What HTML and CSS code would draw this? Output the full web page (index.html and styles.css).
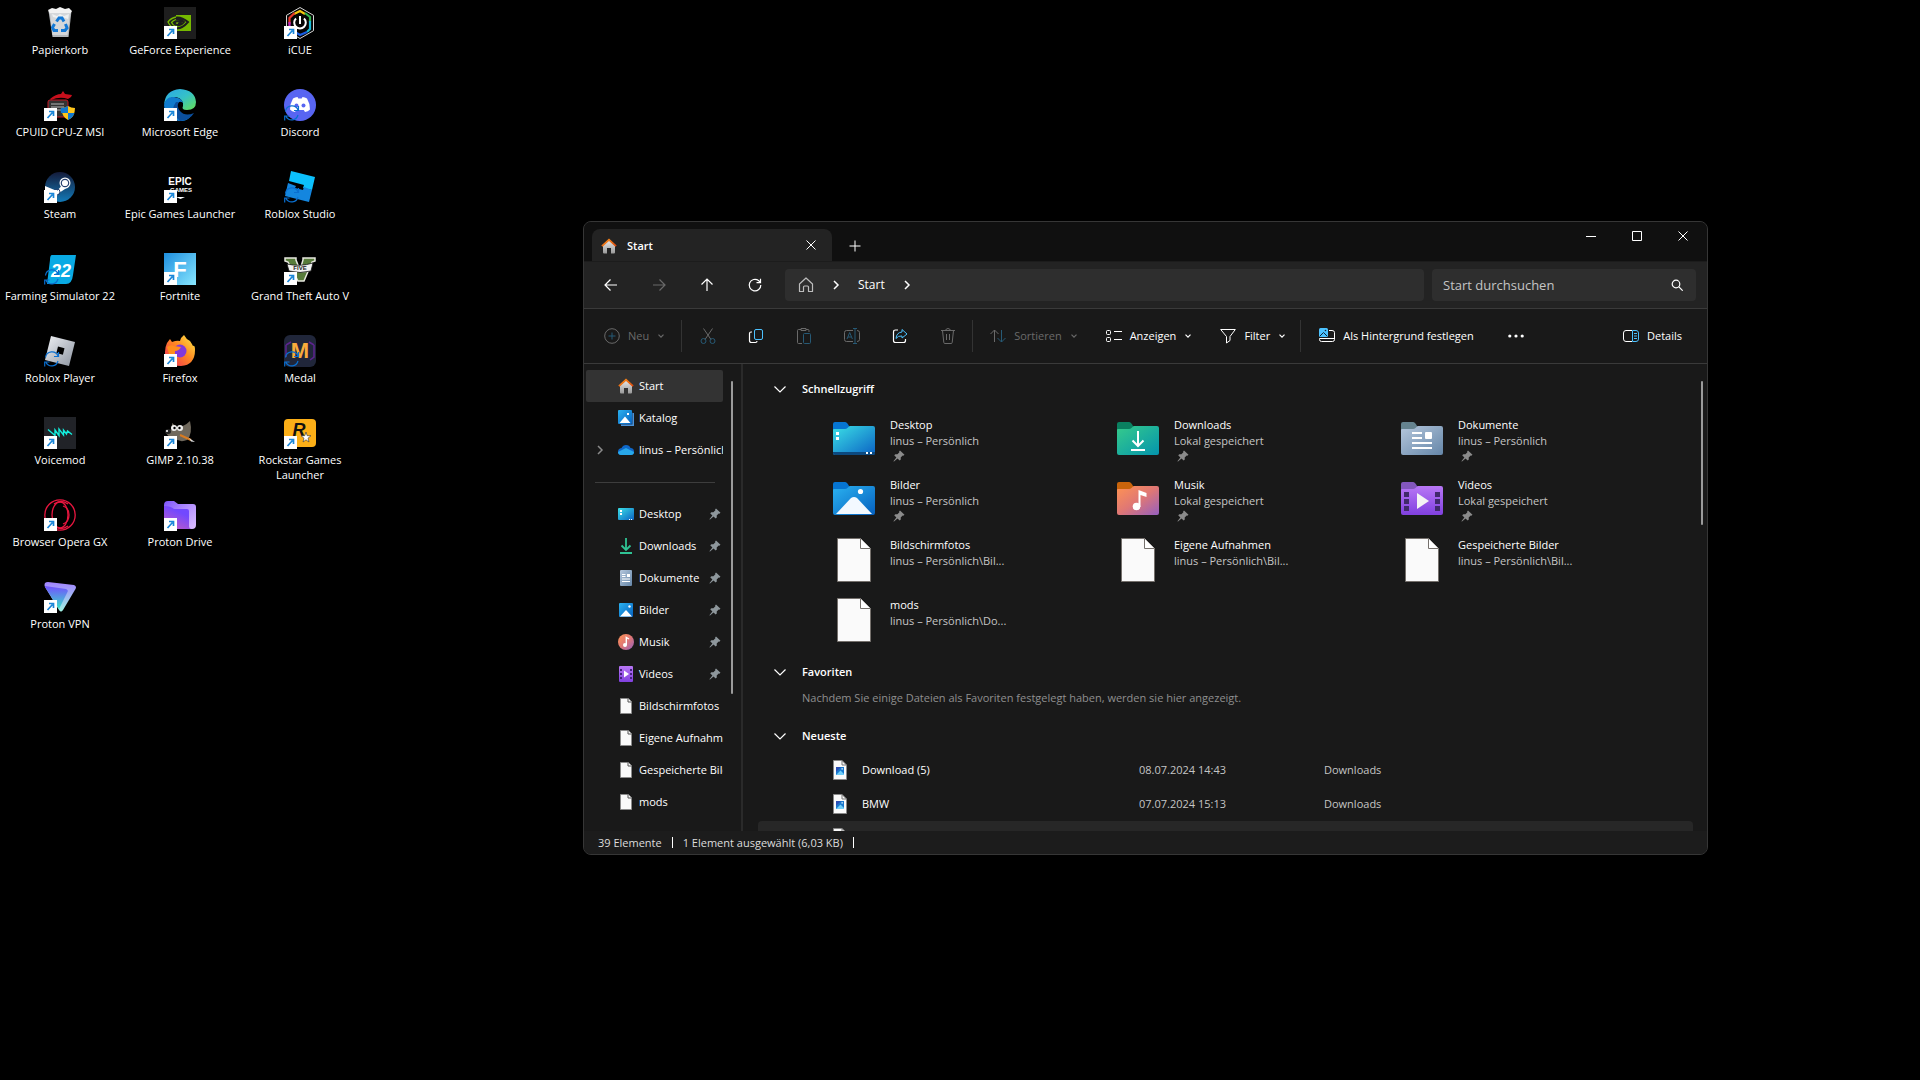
FILE: index.html
```
<!DOCTYPE html>
<html lang="de">

<head>
    <meta charset="UTF-8">
    <title>Start</title>
    <link rel="stylesheet" href="styles.css">
</head>

<body>
    <!-- gemeinsame Symbole -->
    <svg class="defs" width="0" height="0" aria-hidden="true">
        <defs>
            <linearGradient id="gCyan" x1="0" y1="0" x2="1" y2="1"><stop offset="0" stop-color="#3be0e6"/><stop offset="1" stop-color="#0b62c4"/></linearGradient>
            <linearGradient id="gBlue" x1="0" y1="0" x2="1" y2="1"><stop offset="0" stop-color="#2bb2f0"/><stop offset="1" stop-color="#0560bf"/></linearGradient>
            <linearGradient id="gGreen" x1="0" y1="0" x2="1" y2="1"><stop offset="0" stop-color="#36cb8b"/><stop offset="1" stop-color="#0494ad"/></linearGradient>
            <linearGradient id="gOrange" x1="0" y1="0" x2="1" y2="1"><stop offset="0" stop-color="#ff9352"/><stop offset="0.5" stop-color="#df7775"/><stop offset="1" stop-color="#955fc0"/></linearGradient>
            <linearGradient id="gGrey" x1="0" y1="0" x2="1" y2="1"><stop offset="0" stop-color="#b5c7dc"/><stop offset="1" stop-color="#6586a8"/></linearGradient>
            <linearGradient id="gPurple" x1="0" y1="0" x2="0" y2="1"><stop offset="0" stop-color="#b877f5"/><stop offset="1" stop-color="#8040df"/></linearGradient>
            <linearGradient id="gWall" x1="0" y1="0" x2="0" y2="1"><stop offset="0" stop-color="#e8e8e8"/><stop offset="1" stop-color="#999"/></linearGradient>
            <linearGradient id="gRoof" x1="0" y1="0" x2="1" y2="1"><stop offset="0" stop-color="#ff9a1e"/><stop offset="1" stop-color="#d8430c"/></linearGradient>
            <linearGradient id="gSteam" x1="0" y1="0" x2="0" y2="1"><stop offset="0" stop-color="#141b3a"/><stop offset="1" stop-color="#137ab8"/></linearGradient>
            <linearGradient id="gEdge" x1="0" y1="0" x2="1" y2="1"><stop offset="0" stop-color="#2aa6e8"/><stop offset="0.5" stop-color="#35c1c8"/><stop offset="1" stop-color="#66e054"/></linearGradient>
            <linearGradient id="gProton" x1="0" y1="0" x2="1" y2="1"><stop offset="0" stop-color="#7d55fb"/><stop offset="0.5" stop-color="#b592ff"/><stop offset="1" stop-color="#dcc0ff"/></linearGradient>
            <linearGradient id="gDrive" x1="0.8" y1="0" x2="0.2" y2="1"><stop offset="0.3" stop-color="#7248ff"/><stop offset="1" stop-color="#c05bc6"/></linearGradient>
            <linearGradient id="gVpn" x1="0" y1="0" x2="0" y2="1"><stop offset="0" stop-color="#7350ff"/><stop offset="1" stop-color="#38e3c8"/></linearGradient>
            <linearGradient id="gVpnEdge" x1="0" y1="0" x2="0" y2="1"><stop offset="0" stop-color="#a282ff"/><stop offset="1" stop-color="#9ff4e4"/></linearGradient>
            <linearGradient id="gFox" x1="1" y1="0" x2="0" y2="1"><stop offset="0" stop-color="#fff04a"/><stop offset="0.45" stop-color="#ff8a22"/><stop offset="1" stop-color="#f02060"/></linearGradient>
            <linearGradient id="gSilver" x1="0" y1="0" x2="1" y2="1"><stop offset="0" stop-color="#f0f2f6"/><stop offset="1" stop-color="#8b939f"/></linearGradient>
            <linearGradient id="gSky" x1="0" y1="0" x2="1" y2="1"><stop offset="0" stop-color="#1e8ede"/><stop offset="1" stop-color="#88e7ff"/></linearGradient>
        </defs>
        <symbol id="link" viewBox="0 0 13 13">
            <path d="M0 0h13v13H0z" fill="#fff"/>
            <path d="M3.500 10l5-5.500M5 3.500h4.500V8" fill="none" stroke="#1a86d8" stroke-width="1.700"/>
        </symbol>
        <symbol id="sync" viewBox="0 0 16 16">
            <path d="M1.500 6.500A6.500 6.500 0 0 1 14 5M14.500 1v4.500H10M14 10A6.500 6.500 0 0 1 2 11.500M.7 15.500V11H5.500" fill="none" stroke="#0a6fd0" stroke-width="1.200"/>
        </symbol>
        <symbol id="pin" viewBox="0 0 12 12">
            <path d="M7 .5l4.500 4.300-1.200.9-.6-.2-2 2 .1 2.100-1.100 1L4.500 8.400 1 11.500.4 11.300l3-3.900L1.200 5.200l1.200-1 2 .1 2-2-.3-.8z"/>
        </symbol>
        <symbol id="chev" viewBox="0 0 8 8"><path d="M1.500 2.700L4 5.200l2.500-2.500" fill="none" stroke="currentColor" stroke-width="1.200"/></symbol>
        <symbol id="chev-big" viewBox="0 0 14 14"><path d="M1.500 4.500L7 10l5.500-5.500" fill="none" stroke="currentColor" stroke-width="1.200"/></symbol>
        <symbol id="chev-right" viewBox="0 0 12 12"><path d="M4 2l4 4-4 4" fill="none" stroke="currentColor" stroke-width="1.500"/></symbol>
        <symbol id="close" viewBox="0 0 12 12"><path d="M1.500 1.500l9 9M10.500 1.500l-9 9" fill="none" stroke="currentColor"/></symbol>
        <symbol id="house" viewBox="0 0 16 16">
            <path d="M2 7.500L8 2l6 5.500V14.500q0 1-1 1h-3V10H6v5.500H3q-1 0-1-1z" fill="url(#gWall)"/>
            <path d="M8 .5l7.700 7-1.200 1.300L8 3 1.500 8.800.3 7.500z" fill="url(#gRoof)"/>
        </symbol>
        <symbol id="page" viewBox="0 0 16 16"><path d="M2.500.5h8l3 3v12h-11z" fill="#fafafa" stroke="#8b8b8b"/><path d="M10 .5V4h3.500" fill="none" stroke="#555"/></symbol>
        <symbol id="page-big" viewBox="0 0 48 48"><path d="M7.500 3.500h23l10 10v33h-33z" fill="#fafafa" stroke="#75706c"/><path d="M30.500 3.500v10h10" fill="#fff" stroke="#75706c"/></symbol>
        <symbol id="page-image" viewBox="0 0 16 20">
            <path d="M1.500.5h8.500l4.500 4.500v14.500h-13z" fill="#fafafa" stroke="#888"/><path d="M10 .5V5h4.500" fill="none" stroke="#777"/>
            <path d="M4 7h8v8H4z" fill="#1879cf"/><path d="M4 15l4.500-4.500L12 14v1z" fill="#6fcdf8"/><path d="M4 7h5l-5 5z" fill="#2b4fb5"/><path d="M9.500 8.200h1.300v1.300H9.500z" fill="#fff"/>
        </symbol>
        <symbol id="folder-back" viewBox="0 0 48 48"><path d="M3 9q0-2 2-2h10q2 0 4 4l2 1v6H3z"/></symbol>
        <symbol id="folder-front" viewBox="0 0 48 48"><path d="M3 15q0-1 1-1h11q1.500 0 2.500-1l1-1q1-1 2-1h22.500q2 0 2 2v25q0 2-2 2H5q-2 0-2-2z"/></symbol>
        <symbol id="ico-desktop" viewBox="0 0 16 16"><rect y="2" width="16" height="12" rx="1" fill="url(#gCyan)"/><path d="M2 4h2v2H2zM2 7h2v2H2z" fill="#fff"/><path d="M11 13h1v1h-1zM13 13h1v1h-1z" fill="#fff"/></symbol>
        <symbol id="ico-downloads" viewBox="0 0 16 16"><path d="M8 0v11.500M3.500 7.500L8 12l4.500-4.500M2 15h12" fill="none" stroke="#2fc394" stroke-width="1.800"/></symbol>
        <symbol id="ico-docs" viewBox="0 0 16 16"><rect x="2" width="12" height="16" rx="1" fill="url(#gGrey)"/><path d="M4 4.500h3.500M4 6.500h3.500M4 9h8M4 11.500h8" stroke="#fff"/><path d="M9 4h3v3H9z" fill="#fff"/></symbol>
        <symbol id="ico-images" viewBox="0 0 16 16"><rect x="1" y="1" width="14" height="14" rx="1" fill="url(#gBlue)"/><path d="M2 14.500L8 8l6 6.500z" fill="#fff"/><circle cx="11.500" cy="4.500" r="1.200" fill="#fff"/></symbol>
        <symbol id="ico-music" viewBox="0 0 16 16"><circle cx="8" cy="8" r="8" fill="url(#gOrange)"/><circle cx="7" cy="11" r="2" fill="#fff"/><path d="M8.300 11V3.500l2.700 1.500" fill="none" stroke="#fff" stroke-width="1.400"/></symbol>
        <symbol id="ico-videos" viewBox="0 0 16 16"><rect x="1" width="14" height="16" rx="1" fill="url(#gPurple)"/><path d="M2 3h2v2H2zM2 7h2v2H2zM2 11h2v2H2zM12 3h2v2h-2zM12 7h2v2h-2zM12 11h2v2h-2z" fill="#45227e"/><path d="M6 4.500l5 3.500-5 3.500z" fill="#fff"/></symbol>
    </svg>

    <main class="desktop">
        <div class="column">
            <button class="shortcut">
                <svg viewBox="0 0 32 32"><path d="M4.500 4h23L24.500 30h-16z" fill="#b4b8bc"/><path d="M4 3l4-2 4 1 4-2 5 2 4-1 3 3-2 3H6z" fill="#f1f1f1"/><path d="M6 6h20l-2.500 22h-15z" fill="#d4d7da"/><path d="M8 7l5 2 3-2 4 2 5-2-1 5-6-2-5 1-4-1z" fill="#eef0f1"/><path d="M12.500 14.500L15 11h3l2 3.500M21.500 17l1.500 4-2 2.500h-4M14 23.500h-4l-1.500-3 2-3.500" fill="none" stroke="#1379d6" stroke-width="3"/></svg>
                <span>Papierkorb</span>
            </button>
            <button class="shortcut">
                <svg viewBox="0 0 32 32"><path d="M6 10q6-5 11-5l2-3 2 3 7 1-1 2-3 2q-8-3-17 1z" fill="#c80f1c"/><rect x="4" y="11" width="20" height="17" rx="2" fill="#333" stroke="#c31622"/><path d="M7 15h13M7 18h13M7 21h13" stroke="#8b8b8b" stroke-width="1.500"/><path d="M24 17q3 2 7 2 0 9-7 12-6-3-7-12 4 0 7-2z" fill="#ffc61b"/><path d="M24 17v7h-7q-1-3 0-5 4 0 7-2zM24 24h6.500q-1.500 5-6.500 7z" fill="#1278cf"/><use href="#link" y="19" width="13" height="13"/></svg>
                <span>CPUID CPU-Z MSI</span>
            </button>
            <button class="shortcut">
                <svg viewBox="0 0 32 32"><circle cx="16" cy="16" r="15" fill="url(#gSteam)"/><path d="M1 15l12 5 7-8 4 4-9 6-3 4-11-5z" fill="#fff"/><circle cx="21" cy="12" r="5.500" fill="#fff"/><circle cx="21" cy="12" r="3.700" fill="#fff" stroke="#28416f" stroke-width="1.200"/><circle cx="13" cy="21" r="3" fill="none" stroke="#28416f"/><use href="#link" y="19" width="13" height="13"/></svg>
                <span>Steam</span>
            </button>
            <button class="shortcut">
                <svg viewBox="0 0 32 32"><path d="M8 2h24l-3 20q-1 9-7 9H3L6 7q0-5 2-5z" fill="#09aae4"/><text class="logo logo-22" x="17" y="24">22</text><use href="#sync" y="16" width="16" height="16"/></svg>
                <span>Farming Simulator 22</span>
            </button>
            <button class="shortcut">
                <svg viewBox="0 0 32 32"><path d="M7 1l24 6-6 24-24-6z" fill="url(#gSilver)"/><path d="M14 11.500l6.500 1.700-1.600 6.500-6.500-1.700z"/><use href="#sync" y="16" width="16" height="16"/></svg>
                <span>Roblox Player</span>
            </button>
            <button class="shortcut">
                <svg viewBox="0 0 32 32"><path d="M0 0h32v32H0z" fill="#212328"/><path d="M4 12.500l7 6V13l4 5.500V12l4.500 6V13l3 4 1-3 4.500 3.500" fill="none" stroke="#12eddd" stroke-width="1.400"/><use href="#link" y="19" width="13" height="13"/></svg>
                <span>Voicemod</span>
            </button>
            <button class="shortcut">
                <svg viewBox="0 0 32 32"><g fill="none" stroke="#e8163f" stroke-width="1.300"><circle cx="16" cy="16" r="15.200"/><ellipse cx="16" cy="16" rx="8" ry="13"/><path d="M10 5q7-5 14 0M10 27q7 5 14 0M19 7q6 2 6 9t-6 9"/></g><use href="#link" y="19" width="13" height="13"/></svg>
                <span>Browser Opera GX</span>
            </button>
            <button class="shortcut">
                <svg viewBox="0 0 32 32"><path d="M1 2q1-1 3-1l26 3q3 1 1.500 4L19 29q-2 3-4 0L1 6q-1-2 0-4z" fill="url(#gVpnEdge)"/><path d="M1 5l21 3q3 1 1 4L15 28 1 6z" fill="url(#gVpn)"/><use href="#link" y="19" width="13" height="13"/></svg>
                <span>Proton VPN</span>
            </button>
        </div>
        <div class="column">
            <button class="shortcut">
                <svg viewBox="0 0 32 32"><path d="M0 0h32v32H0z" fill="#1e1e1e"/><path d="M12 8h15v16H12z" fill="#76b900"/><path d="M4 15q9-9 20 0-8 9-15 5-4-2-5-5zM8 15q6-6 12 0-4 5-9 2zM12 15q3-2 5 0-1 2-3 1" fill="none" stroke="#1e1e1e" stroke-width="2"/><path d="M12 10q-5 1-8 5 3 6 8 7M12 12.500q-3 1-4.500 3Q9 18.500 12 19.500" fill="none" stroke="#76b900" stroke-width="1.300"/><use href="#link" y="19" width="13" height="13"/></svg>
                <span>GeForce Experience</span>
            </button>
            <button class="shortcut">
                <svg viewBox="0 0 32 32"><path d="M0 16Q1 1 16 0q15 1 16 13 0 8-9 8-6 0-4-4 1-7-7-9-9 0-12 8z" fill="url(#gEdge)"/><path d="M0 16Q2 7 10 8q8 1 9 6-2-2-4-1-4 3-1 9 4 8 13 5-5 6-12 5Q1 30 0 16z" fill="#117bcd"/><path d="M12 13q-6 8 0 15l4 4q10-1 14-8-9 4-14-2-4-5-1-9z" fill="#0b4f9e"/><use href="#link" y="19" width="13" height="13"/></svg>
                <span>Microsoft Edge</span>
            </button>
            <button class="shortcut">
                <svg viewBox="0 0 32 32"><text class="logo logo-epic" x="16" y="14">EPIC</text><text class="logo logo-games" x="17" y="21">GAMES</text><path d="M12 26h9l-4.500 2z" fill="#fff"/><use href="#link" y="19" width="13" height="13"/></svg>
                <span>Epic Games Launcher</span>
            </button>
            <button class="shortcut">
                <svg viewBox="0 0 32 32"><path d="M0 0h32v32H0z" fill="url(#gSky)"/><text class="logo logo-f" x="16" y="24">F</text><use href="#link" y="19" width="13" height="13"/></svg>
                <span>Fortnite</span>
            </button>
            <button class="shortcut">
                <svg viewBox="0 0 32 32"><path d="M3 8l3-4 2 3q5-2 8-1 1-4 4-6 2 4 6 6 2 3 3 5 2-1 2 4 0 15-14 16Q0 31 1 17q0-5 2-9z" fill="url(#gFox)"/><circle cx="16" cy="16" r="6.500" fill="#8239dc"/><path d="M3 12q4-3 7-1l7 1q-2 4-6 4-1 5 4 7-8 1-10-4z" fill="#ff8d1e"/><use href="#link" y="19" width="13" height="13"/></svg>
                <span>Firefox</span>
            </button>
            <button class="shortcut">
                <svg viewBox="0 0 32 32"><path d="M8 6l5 4q7 0 13-6 3 13-3 19-7 3-13-2-5 0-8-5 1-4 6-3z" fill="#6f685c"/><ellipse cx="4" cy="14.500" rx="3" ry="2.500" fill="#222"/><circle cx="3" cy="14" r="1" fill="#fff"/><circle cx="10" cy="11" r="3" fill="#eee"/><circle cx="16" cy="11" r="3" fill="#eee"/><circle cx="10.500" cy="11" r="1.200"/><circle cx="15.500" cy="11" r="1.200"/><path d="M16 18l11 5" stroke="#d87b22" stroke-width="2"/><path d="M25 21l6 4-4-.5z" fill="#ddd"/><use href="#link" y="19" width="13" height="13"/></svg>
                <span>GIMP 2.10.38</span>
            </button>
            <button class="shortcut">
                <svg viewBox="0 0 32 32"><path d="M0 6q0-4 4-4h6l4 3h15q3 0 3 3v18q0 4-4 4H3q-3 0-3-3z" fill="url(#gProton)"/><path d="M0 7q7 0 10 3h13q2 0 2 2v15q0 3 3 3H3q-3 0-3-3z" fill="url(#gDrive)"/><use href="#link" y="19" width="13" height="13"/></svg>
                <span>Proton Drive</span>
            </button>
        </div>
        <div class="column">
            <button class="shortcut">
                <svg viewBox="0 0 32 32"><path d="M16 .5l13.500 7.800v15.400L16 31.500 2.500 23.700V8.300z" fill="#050505" stroke="#d5d5d5"/><g fill="none" stroke-width="2.200"><path d="M10 7l6-3 5 3" stroke="#f5c60c"/><path d="M21 6l5 4v5" stroke="#31b44a"/><path d="M26 14v8l-3 3" stroke="#18b9d6"/><path d="M23 25l-7 3-5-3" stroke="#185de0"/><path d="M5.500 17v-6l5-5" stroke="#e9382b"/><path d="M5.500 15v7l5 4" stroke="#bd26c0"/></g><path d="M12 11.500a5.800 5.800 0 1 0 8 0M16 9v8" fill="none" stroke="#fff" stroke-width="2"/><use href="#link" y="19" width="13" height="13"/></svg>
                <span>iCUE</span>
            </button>
            <button class="shortcut">
                <svg viewBox="0 0 32 32"><circle cx="16" cy="16" r="16" fill="#5865f2"/><path d="M9 9.500q2-1.300 4.500-1.500l.8 1.500h3.400l.8-1.500q2.500.2 4.500 1.500 3 5 3 11-2 2-5 2.500l-1.200-2h-7.600L11 23q-3-.5-5-2.500 0-6 3-11z" fill="#fff"/><circle cx="12.500" cy="16.500" r="2" fill="#5865f2"/><circle cx="19.500" cy="16.500" r="2" fill="#5865f2"/><use href="#sync" y="16" width="16" height="16"/></svg>
                <span>Discord</span>
            </button>
            <button class="shortcut">
                <svg viewBox="0 0 32 32"><path d="M7 0l24 6-3 13-9-2 1-3-15-4z" fill="#0cc0fc"/><path d="M4 12l8 3-1 2 8 2 1-3 8 3-3 12-24-6z" fill="#1486df"/><use href="#sync" y="16" width="16" height="16"/></svg>
                <span>Roblox Studio</span>
            </button>
            <button class="shortcut">
                <svg viewBox="0 0 32 32"><path d="M1 5h11v2l4 10 3-10V5h12v3l-3 1-8 19h-6L4 9 1 8z" fill="#587c3b" stroke="#e8e8e0" stroke-width="1.500"/><path d="M3 11q13 3 26-1l-2 8q-11 3-22 0z" fill="#f2f2f2" stroke="#111" stroke-width=".8"/><text class="logo logo-five" x="16" y="17">FIVE</text><use href="#link" y="19" width="13" height="13"/></svg>
                <span>Grand Theft Auto V</span>
            </button>
            <button class="shortcut">
                <svg viewBox="0 0 32 32"><rect width="32" height="32" rx="6" fill="#20263a"/><path d="M2 10l5-3M2 10v12M30 10l-5-3M30 10v12l-4 3" stroke="#5c238e" fill="none" stroke-width="1.500"/><text class="logo logo-medal" x="16" y="23">M</text><use href="#sync" y="16" width="16" height="16"/></svg>
                <span>Medal</span>
            </button>
            <button class="shortcut">
                <svg viewBox="0 0 32 32"><rect y="2" width="32" height="28" rx="4" fill="#fcaf17"/><text class="logo logo-r" x="15" y="19">R</text><path d="M22 15l1.200 3.700H27l-3 2.500 1 3.800-3-2.200-3 2.200 1-3.800-3-2.500h3.800z" fill="#fff" stroke="#333" stroke-width=".6"/><use href="#link" y="19" width="13" height="13"/></svg>
                <span>Rockstar Games Launcher</span>
            </button>
        </div>
    </main>

    <section class="window">
        <header class="titlebar">
            <div class="tab">
                <svg class="icon"><use href="#house"/></svg>
                <span>Start</span>
                <button class="tab-close" aria-label="Tab schließen"><svg class="small"><use href="#close"/></svg></button>
            </div>
            <button class="tab-new" aria-label="Neuer Tab"><svg class="small" viewBox="0 0 12 12"><path d="M6 .5v11M.5 6h11" stroke="currentColor"/></svg></button>
            <div class="controls">
                <button aria-label="Minimieren"><svg class="small" viewBox="0 0 12 12"><path d="M1 6.500h10" stroke="currentColor"/></svg></button>
                <button aria-label="Maximieren"><svg class="small" viewBox="0 0 12 12"><path d="M1.500 1.500h9v9h-9z" fill="none" stroke="currentColor"/></svg></button>
                <button aria-label="Schließen"><svg class="small"><use href="#close"/></svg></button>
            </div>
        </header>

        <nav class="navbar">
            <button aria-label="Zurück"><svg class="icon" viewBox="0 0 16 16"><path d="M14 8H2.500M7.500 2.500L2 8l5.500 5.500" fill="none" stroke="currentColor" stroke-width="1.200"/></svg></button>
            <button aria-label="Vorwärts" disabled><svg class="icon" viewBox="0 0 16 16"><path d="M2 8h11.500M8.500 2.500L14 8l-5.500 5.500" fill="none" stroke="currentColor" stroke-width="1.200"/></svg></button>
            <button aria-label="Nach oben"><svg class="icon" viewBox="0 0 16 16"><path d="M8 14V2.500M2.500 7.500L8 2l5.500 5.500" fill="none" stroke="currentColor" stroke-width="1.200"/></svg></button>
            <button aria-label="Aktualisieren"><svg class="icon" viewBox="0 0 16 16"><path d="M13.800 8A5.800 5.800 0 1 1 11.500 3.500L13.500 5.500M13.500 1.800v3.900H9.500" fill="none" stroke="currentColor" stroke-width="1.200"/></svg></button>
            <div class="address">
                <svg class="icon home" viewBox="0 0 16 16"><path d="M1.500 7L8 1l6.500 6v7.500h-4V10q0-1-1-1h-3q-1 0-1 1v4.500h-4z" fill="none" stroke="currentColor" stroke-width="1.200" stroke-linejoin="round"/></svg>
                <svg class="small"><use href="#chev-right"/></svg>
                <a href="#">Start</a>
                <svg class="small"><use href="#chev-right"/></svg>
            </div>
            <label class="search">
                <input type="text" placeholder="Start durchsuchen" aria-label="Start durchsuchen">
                <svg class="small" viewBox="0 0 12 12"><circle cx="5" cy="5" r="3.800" fill="none" stroke="currentColor" stroke-width="1.200"/><path d="M7.700 7.700l4 4" stroke="currentColor" stroke-width="1.200"/></svg>
            </label>
        </nav>

        <div class="toolbar">
            <button class="menu new" disabled>
                <svg class="icon" viewBox="0 0 16 16" fill="none"><circle cx="8" cy="8" r="7.300" stroke="currentColor"/><path class="accent" d="M8 4.500v7M4.500 8h7"/></svg>
                Neu <svg class="chev"><use href="#chev"/></svg>
            </button>
            <span class="divider"></span>
            <button class="tool" aria-label="Ausschneiden" disabled><svg class="icon" viewBox="0 0 16 16" fill="none"><path d="M3.500.5L11 11.500M12.500.5L5 11.500" stroke="currentColor"/><circle class="accent" cx="3.500" cy="13" r="2.500"/><circle class="accent" cx="12.500" cy="13" r="2.500"/></svg></button>
            <button class="tool" aria-label="Kopieren"><svg class="icon" viewBox="0 0 16 16" fill="none"><path d="M4 4H3Q1.500 4 1.500 5.500v7q0 2 2 2h4q1.500 0 1.500-1.500" stroke="currentColor" stroke-width="1.200"/><rect class="accent" x="6.500" y="1.500" width="8" height="10" rx="1.500"/></svg></button>
            <button class="tool" aria-label="Einfügen" disabled><svg class="icon" viewBox="0 0 16 16" fill="none"><path d="M6 15.500H2.500q-1 0-1-1v-12q0-1 1-1H5M10 1.500h2q1 0 1 1V4M5 .5h5v2H5z" stroke="currentColor"/><rect class="accent" x="7.500" y="5.500" width="7" height="10" rx="1"/></svg></button>
            <button class="tool" aria-label="Umbenennen" disabled><svg class="icon" viewBox="0 0 16 16" fill="none"><path d="M9 2.500H2.500Q.5 2.500.5 4.500v7q0 2 2 2H9M13 2.500q2.500 0 2.500 2v7q0 2-2.500 2" stroke="currentColor"/><path class="accent" d="M9 .5h4M11 .5v15M9 15.500h4M3 11l2.700-6.500L8.400 11M4 9h3.500"/></svg></button>
            <button class="tool" aria-label="Freigeben"><svg class="icon" viewBox="0 0 16 16" fill="none"><path d="M6 2H3.500q-2 0-2 2v8.500q0 2 2 2h8q2 0 2-2V11" stroke="currentColor" stroke-width="1.200"/><path class="accent" d="M10 1.500L15 6l-5 4V8Q6 7.500 4 10.500 4.500 4.500 10 4z" stroke-linejoin="round"/></svg></button>
            <button class="tool" aria-label="Löschen" disabled><svg class="icon" viewBox="0 0 16 16" fill="none"><path d="M1 2.500h14M2.500 2.500l1.300 12q.1 1 1.200 1h6q1.100 0 1.200-1l1.300-12M5.500 2.500Q6 .5 8 .5t2.500 2M6.500 6v6M9.500 6v6" stroke="currentColor"/></svg></button>
            <span class="divider"></span>
            <button class="menu sort" disabled>
                <svg class="icon" viewBox="0 0 16 16" fill="none"><path d="M4.500 14V2M.5 6l4-4 4 4" stroke="currentColor"/><path class="accent" d="M11.500 2v12M7.500 10l4 4 4-4"/></svg>
                Sortieren <svg class="chev"><use href="#chev"/></svg>
            </button>
            <button class="menu">
                <svg class="icon" viewBox="0 0 16 16" fill="none" stroke="currentColor"><rect x=".5" y="2.500" width="4" height="4" rx="1"/><rect x=".5" y="9.500" width="4" height="4" rx="1"/><path d="M8 3.500h8M8 11.500h8"/></svg>
                Anzeigen <svg class="chev"><use href="#chev"/></svg>
            </button>
            <button class="menu">
                <svg class="icon" viewBox="0 0 16 16" fill="none" stroke="currentColor"><path d="M.7 1.500h14.600L10 8.500v4l-3.500 2.500V8.500z" stroke-linejoin="round"/></svg>
                Filter <svg class="chev"><use href="#chev"/></svg>
            </button>
            <span class="divider"></span>
            <button class="menu wallpaper">
                <svg class="icon" viewBox="0 0 16 16" fill="none"><path d="M10 2.500h3q2.500 0 2.500 2v7q0 2-2 2h-11q-2 0-2-2v-1h15" stroke="currentColor"/><rect width="9" height="9" rx="1.500" fill="#4cc2ff"/><path d="M1 8l3.500-3.500L8 8" stroke="#123"/><circle cx="6.500" cy="2.500" r=".8" fill="#123"/></svg>
                Als Hintergrund festlegen
            </button>
            <button class="tool more" aria-label="Mehr anzeigen"><svg class="icon" viewBox="0 0 16 16"><circle cx="1.800" cy="8" r="1.600" fill="currentColor"/><circle cx="8" cy="8" r="1.600" fill="currentColor"/><circle cx="14.200" cy="8" r="1.600" fill="currentColor"/></svg></button>
            <button class="menu details">
                <svg class="icon" viewBox="0 0 16 16" fill="none"><path d="M9 2.500H3Q.5 2.500.5 5v6q0 2.500 2.500 2.500h6" stroke="currentColor"/><path class="accent" d="M9.500 2.500H13q2.500 0 2.500 2.500v6q0 2.500-2.500 2.500H9.500zM11 5.500h3M11 8h3M11 10.500h3"/></svg>
                Details
            </button>
        </div>

        <div class="content">
            <aside class="sidebar">
                <a href="#" class="side-item active"><svg class="icon"><use href="#house"/></svg><span>Start</span></a>
                <a href="#" class="side-item"><svg class="icon" viewBox="0 0 16 16"><path d="M3 3h13v13H3z" fill="#4a93d8"/><path d="M2 2h12.500v12.500H2z" fill="#16375e"/><rect width="14" height="14" rx="1" fill="url(#gBlue)"/><path d="M1.500 13L7 6.500l5.500 6.500z" fill="#fff"/><path d="M9 3h2v2H9z" fill="#fff"/></svg><span>Katalog</span></a>
                <a href="#" class="side-item tree"><svg class="small arrow"><use href="#chev-right"/></svg><svg class="icon" viewBox="0 0 16 16"><path d="M4 13Q0 13 0 9.500 0 6.500 3.500 6 5 3 8 3q3.500 0 4.500 3 3.500.3 3.500 3.500T12.500 13z" fill="#0f67c8"/><path d="M3 13q-3 0-3-3l8-4 8 4q0 3-3 3z" fill="#28a8ea"/></svg><span>linus – Persönlich</span></a>
                <hr>
                <a href="#" class="side-item"><svg class="icon"><use href="#ico-desktop"/></svg><span>Desktop</span><svg class="pin"><use href="#pin"/></svg></a>
                <a href="#" class="side-item"><svg class="icon"><use href="#ico-downloads"/></svg><span>Downloads</span><svg class="pin"><use href="#pin"/></svg></a>
                <a href="#" class="side-item"><svg class="icon"><use href="#ico-docs"/></svg><span>Dokumente</span><svg class="pin"><use href="#pin"/></svg></a>
                <a href="#" class="side-item"><svg class="icon"><use href="#ico-images"/></svg><span>Bilder</span><svg class="pin"><use href="#pin"/></svg></a>
                <a href="#" class="side-item"><svg class="icon"><use href="#ico-music"/></svg><span>Musik</span><svg class="pin"><use href="#pin"/></svg></a>
                <a href="#" class="side-item"><svg class="icon"><use href="#ico-videos"/></svg><span>Videos</span><svg class="pin"><use href="#pin"/></svg></a>
                <a href="#" class="side-item"><svg class="icon"><use href="#page"/></svg><span>Bildschirmfotos</span></a>
                <a href="#" class="side-item"><svg class="icon"><use href="#page"/></svg><span>Eigene Aufnahmen</span></a>
                <a href="#" class="side-item"><svg class="icon"><use href="#page"/></svg><span>Gespeicherte Bilder</span></a>
                <a href="#" class="side-item"><svg class="icon"><use href="#page"/></svg><span>mods</span></a>
                <div class="thumb"></div>
            </aside>

            <div class="files">
                <h2><svg class="toggle"><use href="#chev-big"/></svg>Schnellzugriff</h2>
                <div class="tiles">
                    <a href="#" class="tile">
                        <svg class="big" viewBox="0 0 48 48"><use href="#folder-back" fill="#0675d2"/><use href="#folder-front" fill="url(#gCyan)"/><path d="M3 37h42v1q0 2-2 2H5q-2 0-2-2z" fill="#0c497f"/><path d="M6 17h3v3H6zM6 22h3v3H6zM36 37h2v2h-2zM40 37h2v2h-2z" fill="#fff"/></svg>
                        <span class="text"><b>Desktop</b><span>linus – Persönlich</span><svg class="pin"><use href="#pin"/></svg></span>
                    </a>
                    <a href="#" class="tile">
                        <svg class="big" viewBox="0 0 48 48"><use href="#folder-back" fill="#0a8060"/><use href="#folder-front" fill="url(#gGreen)"/><path d="M24 16v15M18.500 25.500L24 31l5.500-5.500M17 35h14" fill="none" stroke="#fff" stroke-width="2"/></svg>
                        <span class="text"><b>Downloads</b><span>Lokal gespeichert</span><svg class="pin"><use href="#pin"/></svg></span>
                    </a>
                    <a href="#" class="tile">
                        <svg class="big" viewBox="0 0 48 48"><use href="#folder-back" fill="#65838f"/><use href="#folder-front" fill="url(#gGrey)"/><path d="M14 18h10M14 23h10M14 28h20M14 33h20" stroke="#fff" stroke-width="2"/><rect x="27" y="17" width="7" height="7" rx="1" fill="#fff"/></svg>
                        <span class="text"><b>Dokumente</b><span>linus – Persönlich</span><svg class="pin"><use href="#pin"/></svg></span>
                    </a>
                    <a href="#" class="tile">
                        <svg class="big" viewBox="0 0 48 48"><use href="#folder-back" fill="#0675d2"/><use href="#folder-front" fill="url(#gBlue)"/><path d="M6 39l15-16q3-2 6 0l15 16z" fill="#f3f9ff"/><circle cx="30.500" cy="16.500" r="2.600" fill="#fff"/></svg>
                        <span class="text"><b>Bilder</b><span>linus – Persönlich</span><svg class="pin"><use href="#pin"/></svg></span>
                    </a>
                    <a href="#" class="tile">
                        <svg class="big" viewBox="0 0 48 48"><use href="#folder-back" fill="#c9640b"/><use href="#folder-front" fill="url(#gOrange)"/><circle cx="22.500" cy="31.500" r="3.800" fill="#fff"/><path d="M24.500 15l8 3v4l-6-2v12h-2z" fill="#fff"/></svg>
                        <span class="text"><b>Musik</b><span>Lokal gespeichert</span><svg class="pin"><use href="#pin"/></svg></span>
                    </a>
                    <a href="#" class="tile">
                        <svg class="big" viewBox="0 0 48 48"><use href="#folder-back" fill="#8357bd"/><use href="#folder-front" fill="url(#gPurple)"/><path d="M6 17h5v5H6zM6 24h5v5H6zM6 31h5v5H6zM37 17h5v5h-5zM37 24h5v5h-5zM37 31h5v5h-5z" fill="#40296b"/><path d="M19 18l12 8-12 8z" fill="#f4f4f4"/></svg>
                        <span class="text"><b>Videos</b><span>Lokal gespeichert</span><svg class="pin"><use href="#pin"/></svg></span>
                    </a>
                    <a href="#" class="tile">
                        <svg class="big"><use href="#page-big"/></svg>
                        <span class="text"><b>Bildschirmfotos</b><span>linus – Persönlich\Bil...</span></span>
                    </a>
                    <a href="#" class="tile">
                        <svg class="big"><use href="#page-big"/></svg>
                        <span class="text"><b>Eigene Aufnahmen</b><span>linus – Persönlich\Bil...</span></span>
                    </a>
                    <a href="#" class="tile">
                        <svg class="big"><use href="#page-big"/></svg>
                        <span class="text"><b>Gespeicherte Bilder</b><span>linus – Persönlich\Bil...</span></span>
                    </a>
                    <a href="#" class="tile">
                        <svg class="big"><use href="#page-big"/></svg>
                        <span class="text"><b>mods</b><span>linus – Persönlich\Do...</span></span>
                    </a>
                </div>

                <h2><svg class="toggle"><use href="#chev-big"/></svg>Favoriten</h2>
                <p class="hint">Nachdem Sie einige Dateien als Favoriten festgelegt haben, werden sie hier angezeigt.</p>

                <h2><svg class="toggle"><use href="#chev-big"/></svg>Neueste</h2>
                <table class="recent">
                    <tr>
                        <td class="pic"><svg><use href="#page-image"/></svg></td>
                        <td class="name">Download (5)</td>
                        <td class="date">08.07.2024 14:43</td>
                        <td>Downloads</td>
                    </tr>
                    <tr>
                        <td class="pic"><svg><use href="#page-image"/></svg></td>
                        <td class="name">BMW</td>
                        <td class="date">07.07.2024 15:13</td>
                        <td>Downloads</td>
                    </tr>
                    <tr class="selected">
                        <td class="pic"><svg><use href="#page-image"/></svg></td>
                        <td class="name"></td>
                        <td class="date"></td>
                        <td></td>
                    </tr>
                </table>
                <div class="thumb"></div>
            </div>
        </div>

        <footer class="status">
            <span>39 Elemente</span>
            <span>1 Element ausgewählt (6,03 KB)</span>
        </footer>
    </section>
</body>
</html>
```

FILE: styles.css
```
* {
    box-sizing: border-box;
}

body {
    margin: 0;
    min-height: 100vh;
    background: #000;
    color: #fff;
    font: 11px/16px "Open Sans", "Noto Sans", sans-serif;
    overflow: hidden;
}

button {
    padding: 0;
    border: none;
    background: none;
    color: inherit;
    font: inherit;
}

a {
    color: inherit;
    text-decoration: none;
}

svg {
    flex: none;
    display: block;
}

.defs {
    height: 0;
}

.icon {
    width: 16px;
    height: 16px;
}

.small {
    width: 12px;
    height: 12px;
}

/* Desktop */
.desktop {
    display: flex;
    padding-top: 7px;
}

.column {
    width: 120px;
}

.shortcut {
    display: flex;
    flex-direction: column;
    align-items: center;
    gap: 3px;
    width: 100%;
    height: 82px;
    line-height: 15px;
    text-align: center;
}

.shortcut svg {
    width: 32px;
    height: 32px;
}

.logo {
    font-family: "Liberation Sans Narrow", "Liberation Sans", sans-serif;
    font-weight: bold;
    text-anchor: middle;
    fill: #fff;
}

.logo-22 {
    font-size: 18px;
    font-style: italic;
}

.logo-epic {
    font-size: 10px;
}

.logo-games {
    font-size: 6px;
}

.logo-f {
    font-size: 22px;
}

.logo-five {
    font-size: 6px;
    fill: #222;
}

.logo-medal {
    font-size: 22px;
    fill: #f8ac3c;
}

.logo-r {
    font-size: 18px;
    font-style: italic;
    fill: #111;
}

/* Explorer */
.window {
    position: absolute;
    left: 583px;
    right: 212px;
    top: 221px;
    bottom: 225px;
    display: flex;
    flex-direction: column;
    background: #191919;
    border: 1px solid #363636;
    border-radius: 8px;
    overflow: hidden;
}

.titlebar {
    display: flex;
    align-items: flex-end;
    height: 40px;
    padding-left: 8px;
    background: #101010;
    border-bottom: 1px solid #1c1c1c;
}

.tab {
    display: flex;
    align-items: center;
    gap: 10px;
    width: 240px;
    height: 32px;
    padding: 2px 8px 0 9px;
    background: #232323;
    border-radius: 8px 8px 0 0;
    font-weight: 600;
}

.tab-close {
    margin-left: auto;
    padding: 0 7px 2px 0;
}

.tab-new {
    padding: 0 17px;
    height: 30px;
}

.controls {
    display: flex;
    align-self: flex-start;
    margin-left: auto;
    padding-right: 1px;
}

.controls button {
    display: grid;
    place-items: center;
    width: 46px;
    height: 28px;
}

.navbar {
    display: flex;
    align-items: center;
    height: 47px;
    padding: 0 11px 0 3px;
    background: #232323;
    border-bottom: 1px solid #3a3a3a;
}

.navbar > button,
.tool {
    display: grid;
    place-items: center;
    width: 48px;
    height: 32px;
}

button:disabled {
    color: #6a6a6a;
}

.address,
.search {
    display: flex;
    align-items: center;
    height: 32px;
    background: #2e2e2e;
    border-radius: 4px;
    font-size: 13px;
}

.address {
    flex: 1;
    gap: 16px;
    margin-left: 6px;
    padding-left: 13px;
}

.address a {
    font-size: 12px;
}

.home {
    color: #bdbdbd;
}

.search {
    width: 264px;
    margin-left: 8px;
    padding: 0 13px 0 11px;
}

.search input {
    flex: 1;
    min-width: 0;
    padding: 0;
    border: none;
    background: none;
    color: #fff;
    font: inherit;
}

.search input::placeholder {
    color: #c5c5c5;
}

.toolbar {
    display: flex;
    align-items: center;
    height: 55px;
    padding: 0 17px 0 12px;
    border-bottom: 1px solid #3a3a3a;
}

.menu {
    display: flex;
    align-items: center;
    gap: 8px;
    height: 32px;
    padding: 0 14px;
}

.menu.new {
    padding: 0 16px 0 8px;
}

.menu.sort {
    padding-left: 17px;
}

.menu.wallpaper {
    padding-left: 18px;
}

.menu.details {
    margin-left: auto;
    padding: 0 8px;
}

.chev {
    width: 8px;
    height: 8px;
}

.divider {
    width: 1px;
    height: 32px;
    background: #333;
}

.divider + .tool {
    margin-left: 2px;
}

.accent {
    stroke: #4cc2ff;
}

:disabled .accent {
    stroke: #275a76;
}

.more {
    margin-left: 4px;
}

.content {
    display: flex;
    flex: 1;
    min-height: 0;
}

.sidebar {
    position: relative;
    width: 159px;
    padding: 6px 18px 0 2px;
    border-right: 2px solid #2a2a2a;
    overflow: hidden;
}

.side-item {
    display: flex;
    align-items: center;
    gap: 5px;
    height: 32px;
    padding-left: 32px;
    border-radius: 2px;
    white-space: nowrap;
    overflow: hidden;
}

.side-item.active {
    background: #333;
}

.side-item.tree {
    padding-left: 8px;
}

.side-item .arrow {
    margin-right: 7px;
    color: #8a8a8a;
}

.sidebar hr {
    height: 1px;
    margin: 16px 8px 15px 9px;
    border: none;
    background: #3d3d3d;
}

.pin {
    width: 12px;
    height: 12px;
    fill: #8e979c;
}

.side-item .pin {
    margin-left: auto;
    margin-right: 2px;
}

.thumb {
    position: absolute;
    top: 17px;
    right: 8px;
    width: 2px;
    height: 313px;
    background: #9b9b9b;
    border-radius: 1px;
}

.files {
    position: relative;
    flex: 1;
    padding: 9px 14px 0 15px;
    overflow: hidden;
}

.files .thumb {
    right: 4px;
    height: 144px;
}

.files h2 {
    display: flex;
    align-items: center;
    gap: 15px;
    height: 32px;
    margin: 0;
    padding-left: 15px;
    font-size: 11px;
    font-weight: 600;
}

.toggle {
    width: 14px;
    height: 14px;
}

.tiles {
    display: grid;
    grid-template-columns: repeat(auto-fill, 284px);
    grid-auto-rows: 60px;
    padding: 12px 0 0 72px;
    margin-bottom: -1px;
}

.tile {
    display: flex;
    gap: 12px;
}

.big {
    width: 48px;
    height: 48px;
    margin-top: -2px;
}

.text {
    display: flex;
    flex-direction: column;
    color: #c5c5c5;
}

.text b {
    font-weight: normal;
    color: #fff;
}

.text .pin {
    margin: 1px 0 0 3px;
    fill: #8b8b8b;
}

.hint {
    margin: 2px 0 14px 44px;
    color: #8f8f8f;
}

.recent {
    width: 100%;
    border-collapse: collapse;
    margin-top: 1px;
    color: #c5c5c5;
    table-layout: fixed;
}

.recent td {
    height: 34px;
    padding: 0;
}

.recent .pic {
    width: 104px;
    padding-left: 74px;
}

.pic svg {
    width: 16px;
    height: 20px;
}

.recent .name {
    width: 277px;
    color: #fff;
}

.recent .date {
    width: 185px;
}

.selected td {
    background: #272727;
}

.selected td:first-child {
    border-radius: 4px 0 0 4px;
}

.selected td:last-child {
    border-radius: 0 4px 4px 0;
}

.status {
    display: flex;
    align-items: center;
    height: 23px;
    padding-left: 14px;
    background: #1c1c1c;
    color: #dcdcdc;
}

.status span {
    padding-right: 10px;
    margin-right: 10px;
    border-right: 1px solid #fff;
    line-height: 11px;
}
```
